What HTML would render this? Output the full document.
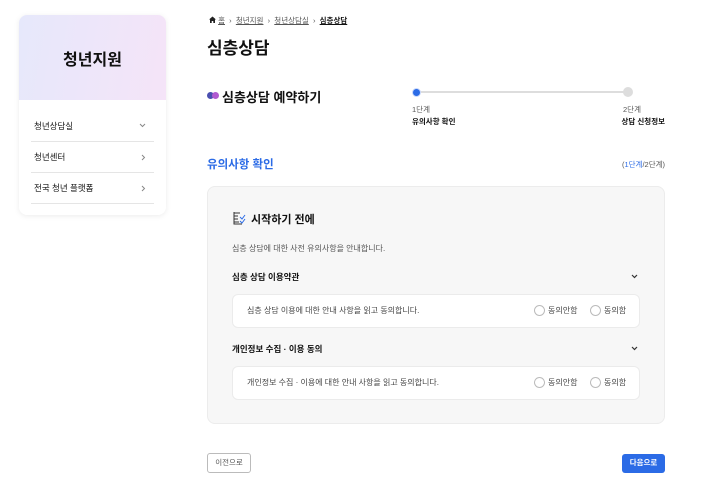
<!DOCTYPE html><html><head><meta charset="utf-8"><style>
*{margin:0;padding:0;box-sizing:border-box}
body{width:720px;height:483px;background:#fff;font-family:"Liberation Sans","Noto Sans CJK KR",sans-serif;color:#111;position:relative;overflow:hidden}
.a{position:absolute;white-space:nowrap}
.card{left:19px;top:15px;width:147px;height:200px;border-radius:8px;background:#fff;box-shadow:0 1px 6px rgba(0,0,0,.08);overflow:hidden}
.hd{height:85px;background:linear-gradient(100deg,#e6e8fb,#f5e4f8);display:flex;align-items:center;justify-content:center;font-size:16px;font-weight:bold}
.mi{position:absolute;left:12px;width:123px;height:31px;border-bottom:1px solid #e5e5e5;font-size:8.5px;line-height:30px;padding-left:3px}
.mi svg{position:absolute;right:8px;top:12px}
.box{left:207px;top:186px;width:458px;height:238px;background:#f7f7f7;border:1px solid #ececec;border-radius:8px}
.wb{left:232px;width:408px;height:34px;background:#fff;border:1px solid #ebebeb;border-radius:6px;font-size:8px;color:#444;line-height:32px;padding-left:14px}
.r{position:absolute;top:10px;width:11px;height:11px;border:1px solid #bbb;border-radius:50%}
.rl{position:absolute;top:0;font-size:8px;color:#444}
.btn{border-radius:3px;font-size:7.5px;text-align:center;line-height:18px}
</style></head><body>
<div class="a card"><div class="hd">청년지원</div>
<div class="mi" style="top:96px">청년상담실<svg width="7" height="5" viewBox="0 0 7 5"><path d="M1 1l2.5 2.5L6 1" fill="none" stroke="#888" stroke-width="1"/></svg></div>
<div class="mi" style="top:127px">청년센터<svg width="5" height="7" viewBox="0 0 5 7" style="top:12px"><path d="M1 1l2.5 2.5L1 6" fill="none" stroke="#888" stroke-width="1"/></svg></div>
<div class="mi" style="top:158px">전국 청년 플랫폼<svg width="5" height="7" viewBox="0 0 5 7" style="top:12px"><path d="M1 1l2.5 2.5L1 6" fill="none" stroke="#888" stroke-width="1"/></svg></div>
</div>
<div class="a" style="left:209px;top:15px;font-size:7.5px;color:#555"><svg width="7" height="7" viewBox="0 0 7 7"><path d="M0 3.5L3.5 0.5L7 3.5H6V7H4.3V5H2.7V7H1V3.5Z" fill="#222"/></svg> <u>홈</u> &nbsp;›&nbsp; <u>청년지원</u> &nbsp;›&nbsp; <u>청년상담실</u> &nbsp;›&nbsp; <u style="color:#111;font-weight:bold">심층상담</u></div>
<div class="a" style="left:207px;top:34px;font-size:17px;font-weight:bold">심층상담</div>
<div class="a" style="left:207px;top:92px;width:12px;height:7px"><div style="position:absolute;left:0;width:7px;height:7px;border-radius:50%;background:#4a4fb0"></div><div style="position:absolute;left:5px;width:7px;height:7px;border-radius:50%;background:#b05ad0"></div></div>
<div class="a" style="left:222px;top:87px;font-size:13px;font-weight:bold">심층상담 예약하기</div>
<div class="a" style="left:418px;top:91px;width:210px;height:2px;background:#ddd"></div>
<div class="a" style="left:412px;top:88px;width:9px;height:9px;border-radius:50%;background:#2b6be6;border:1.5px solid #c9d8fb"></div>
<div class="a" style="left:623px;top:87px;width:10px;height:10px;border-radius:50%;background:#ddd"></div>
<div class="a" style="left:412px;top:104px;font-size:7.5px;color:#555">1단계</div>
<div class="a" style="left:412px;top:116px;font-size:7.5px;font-weight:bold">유의사항 확인</div>
<div class="a" style="left:623px;top:104px;font-size:7.5px;color:#555">2단계</div>
<div class="a" style="right:55px;top:116px;font-size:7.5px;font-weight:bold">상담 신청정보</div>
<div class="a" style="left:207px;top:156px;font-size:11.5px;color:#2b6be6;font-weight:bold">유의사항 확인</div>
<div class="a" style="right:55px;top:159px;font-size:7.5px;color:#555">(<span style="color:#2b6be6">1단계</span>/2단계)</div>
<div class="a box"></div>
<svg class="a" style="left:233px;top:211px" width="14" height="14" viewBox="0 0 14 14"><path d="M1 2h6M1 5h4M1 8h4M1 11h5M1 1v12h8" fill="none" stroke="#333" stroke-width="1"/><path d="M7 6l2 2 3-4M7 10l2 2 3-4" fill="none" stroke="#2b6be6" stroke-width="1"/></svg>
<div class="a" style="left:251px;top:211px;font-size:11px;font-weight:bold">시작하기 전에</div>
<div class="a" style="left:232px;top:243px;font-size:8px;color:#555">심층 상담에 대한 사전 유의사항을 안내합니다.</div>
<div class="a" style="left:232px;top:271px;font-size:8.5px;font-weight:bold">심층 상담 이용약관</div>
<svg class="a" style="left:631px;top:274px" width="7" height="5" viewBox="0 0 7 5"><path d="M1 1l2.5 2.5L6 1" fill="none" stroke="#333" stroke-width="1.2"/></svg>
<div class="a wb" style="top:294px">심층 상담 이용에 대한 안내 사항을 읽고 동의합니다.<div class="r" style="left:301px"></div><div class="rl" style="left:315px">동의안함</div><div class="r" style="left:357px"></div><div class="rl" style="left:371px">동의함</div></div>
<div class="a" style="left:232px;top:343px;font-size:8.5px;font-weight:bold">개인정보 수집 · 이용 동의</div>
<svg class="a" style="left:631px;top:346px" width="7" height="5" viewBox="0 0 7 5"><path d="M1 1l2.5 2.5L6 1" fill="none" stroke="#333" stroke-width="1.2"/></svg>
<div class="a wb" style="top:366px">개인정보 수집 · 이용에 대한 안내 사항을 읽고 동의합니다.<div class="r" style="left:301px"></div><div class="rl" style="left:315px">동의안함</div><div class="r" style="left:357px"></div><div class="rl" style="left:371px">동의함</div></div>
<div class="a btn" style="left:207px;top:453px;width:44px;height:20px;border:1px solid #bbb;color:#555">이전으로</div>
<div class="a btn" style="left:622px;top:454px;width:43px;height:19px;background:#2b6be6;color:#fff;font-weight:bold">다음으로</div>
</body></html>
